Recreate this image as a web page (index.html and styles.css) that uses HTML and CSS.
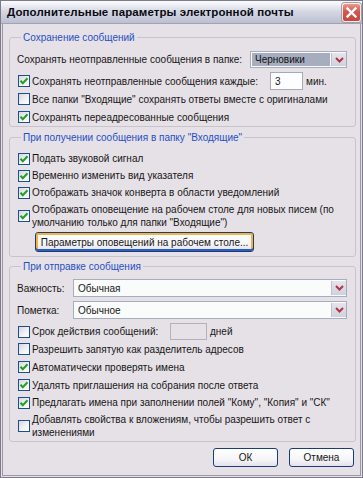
FILE: index.html
```html
<!DOCTYPE html>
<html lang="ru">
<head>
<meta charset="utf-8">
<title>Дополнительные параметры электронной почты</title>
<link rel="stylesheet" href="styles.css">
</head>
<body>
<div class="window">
  <div class="titlebar">
    <span class="title">Дополнительные параметры электронной почты</span>
    <span class="close"><svg width="13" height="13" viewBox="0 0 13 13"><path d="M2.5 2.5 L10.5 10.5 M10.5 2.5 L2.5 10.5" stroke="#fff" stroke-width="2.4" stroke-linecap="square" fill="none"/></svg></span>
  </div>
  <div class="body">
    <fieldset class="group g1">
      <legend>Сохранение сообщений</legend>
      <div class="row r17">
        <span class="lbl">Сохранять неотправленные сообщения в папке:</span>
        <span class="select sel-folder"><span class="value focused">Черновики</span><span class="arrow"><svg width="9" height="6" viewBox="0 0 9 6"><path d="M1 1 L4.5 4.5 L8 1" stroke="#b3344a" stroke-width="2" fill="none"/></svg></span></span>
      </div>
      <div class="row r18 mt4">
        <span class="cb on"><svg width="10" height="10" viewBox="0 0 10 10"><path d="M1.5 4.8 L3.8 7.3 L8.5 2.3" stroke="#21a121" stroke-width="2" fill="none"/></svg></span>
        <span class="txt w-save">Сохранять неотправленные сообщения каждые:</span>
        <span class="input in-min">3</span>
        <span class="unit">мин.</span>
      </div>
      <div class="row r18">
        <span class="cb"></span>
        <span class="txt">Все папки "Входящие" сохранять ответы вместе с оригиналами</span>
      </div>
      <div class="row r18">
        <span class="cb on"><svg width="10" height="10" viewBox="0 0 10 10"><path d="M1.5 4.8 L3.8 7.3 L8.5 2.3" stroke="#21a121" stroke-width="2" fill="none"/></svg></span>
        <span class="txt">Сохранять переадресованные сообщения</span>
      </div>
    </fieldset>

    <fieldset class="group g2">
      <legend>При получении сообщения в папку "Входящие"</legend>
      <div class="row r17">
        <span class="cb on"><svg width="10" height="10" viewBox="0 0 10 10"><path d="M1.5 4.8 L3.8 7.3 L8.5 2.3" stroke="#21a121" stroke-width="2" fill="none"/></svg></span>
        <span class="txt">Подать звуковой сигнал</span>
      </div>
      <div class="row r17">
        <span class="cb on"><svg width="10" height="10" viewBox="0 0 10 10"><path d="M1.5 4.8 L3.8 7.3 L8.5 2.3" stroke="#21a121" stroke-width="2" fill="none"/></svg></span>
        <span class="txt">Временно изменить вид указателя</span>
      </div>
      <div class="row r17">
        <span class="cb on"><svg width="10" height="10" viewBox="0 0 10 10"><path d="M1.5 4.8 L3.8 7.3 L8.5 2.3" stroke="#21a121" stroke-width="2" fill="none"/></svg></span>
        <span class="txt">Отображать значок конверта в области уведомлений</span>
      </div>
      <div class="row two mt2">
        <span class="cb on"><svg width="10" height="10" viewBox="0 0 10 10"><path d="M1.5 4.8 L3.8 7.3 L8.5 2.3" stroke="#21a121" stroke-width="2" fill="none"/></svg></span>
        <span class="txt">Отображать оповещение на рабочем столе для новых писем (по<br>умолчанию только для папки "Входящие")</span>
      </div>
      <div class="btnrow">
        <span class="btn btn-focus">Параметры оповещений на рабочем столе...</span>
      </div>
    </fieldset>

    <fieldset class="group g3">
      <legend>При отправке сообщения</legend>
      <div class="row r18">
        <span class="lbl w-field">Важность:</span>
        <span class="select grow"><span class="value">Обычная</span><span class="arrow"><svg width="9" height="6" viewBox="0 0 9 6"><path d="M1 1 L4.5 4.5 L8 1" stroke="#b3344a" stroke-width="2" fill="none"/></svg></span></span>
      </div>
      <div class="row r18 mt4">
        <span class="lbl w-field">Пометка:</span>
        <span class="select grow"><span class="value">Обычное</span><span class="arrow"><svg width="9" height="6" viewBox="0 0 9 6"><path d="M1 1 L4.5 4.5 L8 1" stroke="#b3344a" stroke-width="2" fill="none"/></svg></span></span>
      </div>
      <div class="row r17 mt4">
        <span class="cb"></span>
        <span class="txt w-exp">Срок действия сообщений:</span>
        <span class="input in-days disabled"></span>
        <span class="unit">дней</span>
      </div>
      <div class="row r18">
        <span class="cb"></span>
        <span class="txt">Разрешить запятую как разделитель адресов</span>
      </div>
      <div class="row r18">
        <span class="cb on"><svg width="10" height="10" viewBox="0 0 10 10"><path d="M1.5 4.8 L3.8 7.3 L8.5 2.3" stroke="#21a121" stroke-width="2" fill="none"/></svg></span>
        <span class="txt">Автоматически проверять имена</span>
      </div>
      <div class="row r18">
        <span class="cb on"><svg width="10" height="10" viewBox="0 0 10 10"><path d="M1.5 4.8 L3.8 7.3 L8.5 2.3" stroke="#21a121" stroke-width="2" fill="none"/></svg></span>
        <span class="txt">Удалять приглашения на собрания после ответа</span>
      </div>
      <div class="row r17">
        <span class="cb on"><svg width="10" height="10" viewBox="0 0 10 10"><path d="M1.5 4.8 L3.8 7.3 L8.5 2.3" stroke="#21a121" stroke-width="2" fill="none"/></svg></span>
        <span class="txt">Предлагать имена при заполнении полей "Кому", "Копия" и "СК"</span>
      </div>
      <div class="row two mt2">
        <span class="cb"></span>
        <span class="txt">Добавлять свойства к вложениям, чтобы разрешить ответ с<br>изменениями</span>
      </div>
    </fieldset>

    <div class="actions">
      <span class="btn btn-dlg">ОК</span>
      <span class="btn btn-dlg">Отмена</span>
    </div>
  </div>
</div>
</body>
</html>
```

FILE: styles.css
```css
* { box-sizing: border-box; }
html, body { margin: 0; padding: 0; }
body {
  width: 363px;
  height: 478px;
  overflow: hidden;
  font-family: "Liberation Sans", Arial, sans-serif;
  font-size: 10px;
  color: #161616;
  background: #e6e1e6;
}
.window {
  width: 363px;
  height: 478px;
  display: flex;
  flex-direction: column;
  border: 1px solid #7c7a88;
  background: #e6e1e6;
}
.titlebar {
  height: 23px;
  flex: none;
  display: flex;
  align-items: center;
  justify-content: space-between;
  padding: 0 1px 0 6px;
  background: linear-gradient(#fbfbfd 0%, #eef0f5 18%, #d6d9e4 45%, #c8cbd9 75%, #bcbfcd 100%);
  border-bottom: 1px solid #a2a2b2;
}
.title {
  font-weight: bold;
  font-size: 11.5px;
  color: #0a0a12;
  letter-spacing: 0.1px;
}
.close {
  width: 19px;
  height: 19px;
  border-radius: 3px;
  border: 1px solid #f4eef0;
  background: linear-gradient(#ec9a8c, #d2574a 45%, #c6473b);
  box-shadow: 0 0 0 1px #a89ca6;
  display: flex;
  align-items: center;
  justify-content: center;
}
.body {
  flex: 1;
  display: flex;
  flex-direction: column;
  margin: 0 1px 1px 1px;
  border: 1px solid #9a98a8;
  border-top: none;
  padding: 7px 4px 0 6px;
}
.group {
  margin: 0;
  border: 1px solid #c9c4cc;
  border-radius: 3px;
  padding: 0 8px 0 7px;
  min-width: 0;
}
.group legend {
  color: #1f4fc4;
  padding: 0 2px;
  margin-left: 4px;
  line-height: 13px;
  height: 13px;
}
.g1 { padding-top: 7px; padding-bottom: 0; }
.g2 { margin-top: 4px; padding-top: 6px; padding-bottom: 4px; }
.g3 { margin-top: 3px; padding-top: 6px; padding-bottom: 2px; }

.row {
  display: flex;
  align-items: center;
  white-space: nowrap;
}
.r17 { height: 17px; }
.r18 { height: 18px; }
.two { height: 26px; line-height: 13px; }
.mt2 { margin-top: 2px; }
.mt4 { margin-top: 4px; }

.cb {
  flex: none;
  width: 12px;
  height: 12px;
  margin-left: 1px;
  margin-right: 2px;
  border: 1px solid #1d4f8c;
  background: linear-gradient(135deg, #d8d5dc 0%, #f2f1f4 55%, #ffffff 100%);
  display: flex;
  align-items: center;
  justify-content: center;
}
.txt { flex: none; }
.w-save { width: 238px; }
.w-exp { width: 138px; }
.w-field { width: 56px; flex: none; }
.lbl { flex: none; }

.select {
  display: flex;
  height: 100%;
  border: 1px solid #a7adbf;
  background: #fafbfb;
}
.sel-folder { width: 97px; margin-left: auto; }
.select.grow { flex: 1; }
.select .value {
  flex: 1;
  padding-left: 3px;
  display: flex;
  align-items: center;
  margin: 1px;
}
.select .value.focused {
  background: #a6adbf;
  color: #111;
}
.select .arrow {
  flex: none;
  width: 15px;
  margin: 1px 0 1px 0;
  background: linear-gradient(#e6e4ec, #cfd2de);
  border-left: 1px solid #c4c0cc;
  display: flex;
  align-items: center;
  justify-content: center;
}

.input {
  flex: none;
  height: 100%;
  border: 1px solid #a8a8b8;
  background: #fdfdfd;
  padding-left: 4px;
  display: flex;
  align-items: center;
}
.in-min { width: 33px; }
.in-days { width: 37px; }
.input.disabled { background: #e6e1e6; border-color: #b4b0bc; }
.unit { margin-left: 3px; }

.btn {
  display: flex;
  align-items: center;
  justify-content: center;
  border: 1px solid #1c3c78;
  border-radius: 3px;
  background: linear-gradient(#ffffff 0%, #f6f5f8 60%, #e4e2ea 100%);
  color: #161616;
  white-space: nowrap;
}
.btnrow {
  display: flex;
  margin-top: 3px;
  padding-left: 18px;
}
.btn-focus {
  width: 219px;
  height: 20px;
  box-shadow: inset 0 -2px 0 #2a5cc0, inset 0 0 0 2px #f5b33c;
}
.actions {
  display: flex;
  justify-content: flex-end;
  gap: 11px;
  margin-top: 6px;
  margin-right: 2px;
}
.btn-dlg {
  width: 65px;
  height: 19px;
}
```
